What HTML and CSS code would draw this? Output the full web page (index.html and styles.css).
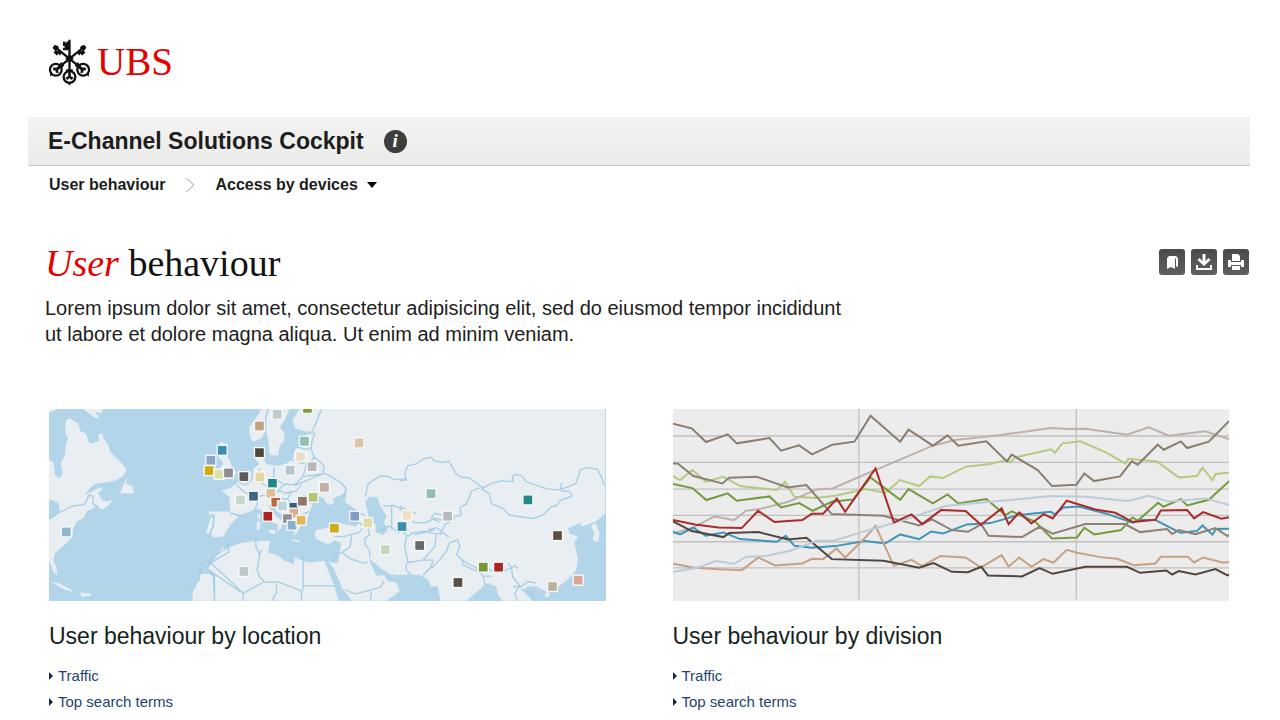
FILE: index.html
```html
<!DOCTYPE html>
<html lang="en">
<head>
<meta charset="utf-8">
<meta name="viewport" content="width=device-width, initial-scale=1">
<title>E-Channel Solutions Cockpit</title>
<link rel="stylesheet" href="styles.css">
</head>
<body>
<div class="page">
  <header>
    <a class="logo" href="#" aria-label="UBS home">
      <svg class="keys" viewBox="52 40 132 144" aria-hidden="true">
        <g fill="none" stroke="#111" stroke-width="7">
          <path d="M118 44V140M88 126L162 66M148 126L74 66"/>
          <circle cx="118" cy="158" r="18"/><circle cx="76" cy="136" r="18"/><circle cx="160" cy="136" r="18"/>
        </g>
        <g fill="#111">
          <path d="M98 49h7v4h4v-4h9v27H98v-8h5v-5h-5zM142 84l9-9 4 4 4-5 8 9-10 9-5-5-4 5zM154 62l10-2 6 8-8 10-12-9zM94 84l-9-9-4 4-4-5-8 9 10 9 5-5 4 5zM82 62l-10-2-6 8 8 10 12-9z"/>
          <path d="M105 101l13-13 13 13-13 13zM108 134h20v9h-20zM112 174h12l-6 11zM92 112l10 10-9 11-9-9zM144 112l-10 10 9 11 9-9zM58 144l10 4-9 9zM178 144l-10 4 9 9z"/>
          <path d="M114 142h8v14l9 4-7 7-6-6-6 6-7-7 9-4zM87 122l6 6-10 9 2 9-9-1-1-7-8-1 2-9 8 2zM149 122l-6 6 10 9-2 9 9-1 1-7 8-1-2-9-8 2z"/>
        </g>
      </svg>
      <span>UBS</span>
    </a>
    <div class="titlebar">
      <h1>E-Channel Solutions Cockpit</h1>
      <button class="info" type="button" aria-label="Information">i</button>
    </div>
    <nav class="crumbs" aria-label="Breadcrumb">
      <a href="#">User behaviour</a>
      <svg class="chevron" viewBox="0 0 10 16" aria-hidden="true"><path d="M1 1l8 7-8 7"/></svg>
      <button type="button">Access by devices <svg class="caret" viewBox="0 0 10 6" aria-hidden="true"><path d="M0 0h10L5 6z"/></svg></button>
    </nav>
  </header>

  <main>
    <div class="intro">
      <div>
        <h2><em>User</em> behaviour</h2>
        <p>Lorem ipsum dolor sit amet, consectetur adipisicing elit, sed do eiusmod tempor incididunt ut labore et dolore magna aliqua. Ut enim ad minim veniam.</p>
      </div>
      <div class="tools">
        <button type="button" aria-label="Bookmark"><svg viewBox="0 0 26 26"><path d="M8 9l2-2h7l2 2v9l-2-1v-7l-1-1v11l-4-2-4 2z"/></svg></button>
        <button type="button" aria-label="Download"><svg viewBox="0 0 26 26"><path d="M11.500 5h3v7l3-3 2 2-6.500 6-6.500-6 2-2 3 3zM5 16h2v3h12v-3h2v5H5z"/></svg></button>
        <button type="button" aria-label="Print"><svg viewBox="0 0 26 26"><path d="M9 5h6l2 2v5H9zM5 11h3v2h10v-2h3v7h-3v-2H8v2H5zM9 17h8v4H9z"/></svg></button>
      </div>
    </div>

    <div class="cards">
      <section>
        <svg class="figure map" viewBox="27 27 1671 576" role="img" aria-label="Map of user locations">
          <g class="land">
            <path d="M27 27h22l-8 6-14 3zM78 60l12-5 10 7 15 8 7 25h8l10 10 5 20 10 5 23-8-3-17 12-7 5 20 13 17 5 20 25 25 15 15 10 15-10 18-15 10-20 7-20 3-30 4-15 13-15 20 15-7 30-16 8 6-13 10 10 22 15 5 18-5-8 12-20 16-12-3-3-10-15 10-20 10-10 20-20 10-10 20-3 25-12 15-23 20-17 15-5 20 10 25 2 20-10-5-12-30-3-10V360l18-10 15-15-5-25-20-10h-8V180l13 5 5 40 15 10 8-15-6-30 13-25 3-35 7-15-10-20z"/>
            <path d="M258 238l5-4-5 17 20 9 4 20h-42zM130 27h60l-8 13-17-5 15 23-20-8zM35 545l25 7 35 18 3 6-23-6-25-14zM120 578l30 4 5 6-30 3zM540 125l25 8-8 28 16 25 5 19 12 12-10 18-50 6 16-16-6-20 10-15-15-20zM497 198l29-2 2 30-32 3z"/>
            <g transform="translate(480)">
              <path d="M185 27l-20 33-17 20 2 30 10 15 25-10 13-25 7 30 5 45 25 2 5-32 14-14-1-22-13-19 15-20 15-33z"/>
              <path d="M300 27l-22 33 8 25 34 10 25-3v8l-20 3-25 15-2 22-13 10-5 25-18 15-30 8-32-6-12-22 4-25-22 5-2 30 10 12-18 16-20 27-15 10-15 5-20 15-25 7 23 18 4 45H25l7 20-14 45 17 2 5 10 30-2 15-25 10-15 25-25 30-10 25-10 15 10 10 15 15 15 20 10-3 20 13-10 3-20-23-20-20-25 10-5 20 20 25 20 10 35 15 5-5 15 10-10 8-15 12-15 15-15 5-20 150 25-10 20-50-10-35 13-35 7-5 13 5 15 35 15 20-10 20 5-5 30-5 28-5 4-40-7-40 5-20-5-25-10-3 20-27-10-20-15-30-10 5-35-50 1-40 6-40 16-12-3-28 40-20 25-20 20-22 50V603H560l40-28-10-28 10-22h60l25 15 10 20h20l7 43h78l40-33 15-15 10-5 25 10 5 25 15 18h90l-30-28 15-15h25l30 15 30-10 35-25 25-30 5-30-10-50 10-20-25-10-5-15 35-15 8 10 12-5 30-10 27-25V27z"/>
              <path d="M1175 378l12-10 14 32-6 28-15-8 4-20zM1038 578l12 0-2 14-12-2zM172 365l10 0-2 25-10-3zM173 346l6-5 2 18-7-3zM208 390l20 0-3 14-17-7zM275 419l25 3-3 5-22-4zM368 425l22-6-10 11z"/>
            </g>
          </g>
          <g class="sea" transform="translate(480)">
            <path d="M325 350l14-40 18-22 14 7 14 20 19-5-4-15 42-17-7 28 36 24 10 30-32 3-40-12-30 5-20 10-32 8zM497 305l12-15 25 3 5 20 12 20 10 15-8 20 12 22-15 15-22-8 0-22-20-20zM373 482l13 3 16 20 26 60 28 38h-40l-13-48zM508 475l18 15 22 18 25 16 27 2-6 22-28-3-12-18-24 0-14-28z"/>
          </g>
          <g class="borders">
            <path d="M27 355l38-21 35-16 33-4 15-29 12 5-2 20 14 12M511 352l10-4 0 30-8 15-2 12M575 340l25 8M565 432l2 25-25 15-35 20-4 18H475M503 510l0 7h-25l0 25-12 8v12h-27M506 510l15 20 3 73M506 510l94 65"/>
            <g transform="translate(480)">
              <path d="M205 27l-8 30 1 33M365 27l-15 40-12 22M345 100l-8 22-3 25 10 25 15 12 14 15-4 25M290 140l27 8 18-5M275 180l30 10 28-5 12-15M320 190l-10 40 60-8M308 232l-22 22-35-1-30-20 2-32M160 210l-5 30-18 15-20-8M180 205l-8 25 15 20 25 15M110 255l25 23 25 10 13 20-8 24M170 290l35-5 30-10 10-15 20-8M237 270l18 10 35-7 15-18M285 258l55-25 35-13 20 10 30 20 15 18-10 20M230 295l30 2 20 15 25-6 30-3M310 283l24 28M210 300l28 8 25-10 12-25M260 322l12 18 35 5 20-10M285 350l-18 15-7-25M92 340l50 12M30 345l13 0-5 40-8 15M88 420l-4 22-38 25-15 15-30 15M25 482l105 98 65-35M168 410v30l12 25-8 45 8 22 17 15 33 0M185 450l-8 15M130 580v23M230 545l75 28v30M0 519h20l24 5v79M310 470v88h108M310 558v15M230 550v27l-13 26M372 475l12 10M403 410l28 0 20-6 25-5 14-15-8-15-30-3M403 463l23-5 25-17 5-35M428 458l25 20 40 12 12-3M405 465l-7 22M482 370l23 13 5 22-15 10 2 20 12 15 2 22M440 325l30 10 25 12M435 569l30 13 48-11 30-10 10-18M515 575l-3 28M497 290l8-38 35-23 25 0 20 10 35-2"/>
              <path d="M540 393l28-15 32 22M550 318l26-1v70M578 315l35 15"/>
            </g>
            <g transform="translate(1080)">
              <path d="M0 242l20-2-5-23 10-20 25-5 20-15 25-5 8 10 25 5 20-3 22 38 15 10 25 2 30 23 10 7 25-13 30-8 35 2-2-15 10-7 20 6 10 15 35 13 30 10 35 3 30-10 20-8 10-28 5-15 20-6 30 5 12 20 8 25 22 17M245 266l25 15 5 30 35 15 20 20 70 10 30-10 25-25 18-5 10-15 35-12-8-15-22 0-5-12 4-13M240 264l-25 10-5 18-10 20-18 10 2 24-25 5-20-3-12 12-24-5-25 13-20 0-15 0-20-35-23-2M0 318l25 15 25 8M165 355l-30 20-12 30M85 390l25-7 15 10M75 370l25-12 20 8M0 385l25 25 15-12 35-4 32 8 25-3 15 13M20 410l-5 30 10 48 45-7 35-40 5-38M70 481l30 0-5 20-25 25M95 505l25-25 23-30 5-20 25-10 8 20-10 25 25 22 40 20 25-2 20 10 35-2 30-15 10 8M185 475l5 20 50 22M240 517l10 12 25 0M250 529l8 28M325 490l10 12 5 30 20 25-15 25 8 20M340 560l25 0 20-15 25 5M365 568l28 10 10 25M20 487v25l15 13M95 355l10-15 20 5M45 405l60-16M280 497h5"/>
            </g>
          </g>
          <g class="markers" transform="translate(-13 -13)">
            <rect x="79" y="396" fill="#8fb6cf"/><rect x="547" y="151" fill="#3b8fae"/><rect x="513" y="181" fill="#8ea5c5"/><rect x="508" y="212" fill="#d2a90f"/><rect x="537" y="223" fill="#dfe1ab"/><rect x="566" y="219" fill="#918b92"/>
            <rect x="659" y="78" fill="#c6a27e"/><rect x="712" y="43" fill="#bfcbcd"/><rect x="803" y="25" fill="#7f9b34"/><rect x="659" y="158" fill="#51463d"/><rect x="794" y="124" fill="#90bfb3"/><rect x="782" y="170" fill="#eaddca"/><rect x="817" y="200" fill="#b8b8b8"/><rect x="751" y="211" fill="#b7c7cf"/><rect x="612" y="230" fill="#5c5b5c"/><rect x="660" y="231" fill="#e5d6a2"/><rect x="698" y="250" fill="#208789"/><rect x="854" y="262" fill="#c0b0a4"/><rect x="602" y="300" fill="#c1d9c7"/><rect x="641" y="289" fill="#3e6685"/><rect x="693" y="280" fill="#dcc09a"/><rect x="708" y="307" fill="#bf6640"/><rect x="728" y="318" fill="#bdd6dc"/><rect x="762" y="322" fill="#345e7c"/><rect x="762" y="340" fill="#dca992"/><rect x="788" y="304" fill="#8d7768"/><rect x="820" y="292" fill="#b7c478"/><rect x="743" y="356" fill="#929095"/><rect x="757" y="376" fill="#89b1ce"/><rect x="784" y="361" fill="#dfb85b"/><rect x="684" y="349" fill="#ae2422"/><rect x="884" y="385" fill="#d1ab13"/><rect x="945" y="349" fill="#829fc3"/><rect x="984" y="369" fill="#e1dca3"/><rect x="958" y="129" fill="#dac5a6"/><rect x="1037" y="449" fill="#c5d8be"/><rect x="612" y="515" fill="#bdc9c9"/>
            <rect x="1174" y="281" fill="#91beb2"/><rect x="1102" y="346" fill="#efddc4"/><rect x="1224" y="349" fill="#b7babc"/><rect x="1087" y="380" fill="#398eae"/><rect x="1140" y="437" fill="#65686c"/><rect x="1465" y="300" fill="#258788"/><rect x="1554" y="407" fill="#5e4c3f"/><rect x="1331" y="502" fill="#789634"/><rect x="1377" y="502" fill="#aa2624"/><rect x="1255" y="548" fill="#594c42"/><rect x="1539" y="560" fill="#bdb09f"/><rect x="1616" y="541" fill="#dca797"/>
          </g>
        </svg>
        <h3>User behaviour by location</h3>
        <ul>
          <li><a href="#">Traffic</a></li>
          <li><a href="#">Top search terms</a></li>
        </ul>
      </section>

      <section>
        <svg class="figure chart" viewBox="24 27 1668 575" role="img" aria-label="Line chart of user behaviour by division">
          <path class="grid" d="M24 108H1692M24 187H1692M24 267H1692M24 346H1692M24 425H1692M24 503H1692M581 27V597M1233 27V597"/>
          <g class="lines">
            <polyline stroke="#b5ca80" points="24,228 45,240 82,210 122,245 175,230 225,258 335,270 360,245 388,290 450,294 510,287 600,267 660,278 705,240 762,258 795,229 833,234 902,200 975,192 1025,180 1035,187 1050,172 1125,155 1157,148 1169,158 1191,130 1245,124 1320,156 1380,190 1389,176 1474,184 1540,232 1594,228 1611,203 1641,240 1650,222 1692,218"/>
            <polyline stroke="#bdb2ab" points="24,400 85,382 148,349 207,360 243,332 285,327 370,305 455,268 502,265 600,223 803,137 870,120 1000,106 1155,84 1210,87 1260,86 1385,104 1450,82 1510,107 1620,94 1692,118"/>
            <polyline stroke="#8b7d70" points="24,71 80,85 123,126 188,103 215,130 313,114 348,152 402,136 441,163 502,134 568,125 616,47 705,125 730,89 803,137 847,106 879,137 963,124 1025,184 1039,164 1117,210 1160,258 1233,254 1257,220 1286,243 1364,229 1399,184 1417,194 1477,134 1495,149 1546,124 1565,144 1630,125 1692,62"/>
            <polyline stroke="#3e95b9" points="24,395 45,403 85,383 122,407 175,397 225,417 335,425 362,407 388,437 440,443 510,438 600,423 660,430 705,403 762,417 798,394 834,400 905,373 975,369 1060,345 1157,335 1168,343 1195,322 1240,319 1320,340 1402,368 1420,360 1470,360 1545,398 1594,393 1611,376 1641,404 1651,387 1692,386"/>
            <polyline stroke="#769a3d" points="24,252 82,264 124,300 188,280 215,302 313,289 348,322 402,309 443,332 500,305 565,298 616,232 705,299 730,267 803,310 847,283 879,310 963,297 1020,345 1039,334 1110,365 1160,415 1235,412 1257,383 1287,403 1367,390 1401,352 1417,362 1478,308 1494,320 1546,297 1565,316 1630,299 1692,243"/>
            <polyline stroke="#8e8074" points="24,190 38,190 85,228 172,250 192,233 275,230 368,262 424,255 500,342 654,347 762,376 800,358 860,390 908,395 948,373 970,407 1070,411 1123,380 1162,401 1260,372 1378,372 1424,396 1505,387 1520,402 1540,390 1590,402 1650,384 1686,408 1692,403"/>
            <polyline stroke="#c6a184" points="24,491 85,502 160,507 230,510 280,472 330,496 412,490 440,476 474,477 514,445 540,472 600,413 631,377 686,497 739,479 771,498 825,468 901,472 947,502 1009,465 1030,499 1062,472 1098,500 1135,477 1164,488 1204,449 1235,458 1305,471 1355,476 1405,495 1470,490 1486,470 1567,470 1586,487 1613,472 1674,488 1692,485"/>
            <polyline stroke="#51463f" points="24,364 80,393 175,411 192,399 280,396 368,418 424,413 500,477 655,482 762,503 805,489 860,515 908,516 948,500 968,526 1070,529 1123,504 1162,521 1260,500 1385,500 1424,518 1503,511 1520,523 1540,513 1590,523 1650,507 1686,526 1692,523"/>
            <polyline stroke="#bccbd8" points="24,516 100,502 152,483 207,491 243,470 300,468 375,452 455,422 505,422 600,393 700,365 840,318 1000,303 1155,288 1260,290 1388,303 1450,287 1510,304 1620,295 1692,315"/>
            <polyline stroke="#a92b2b" points="24,360 90,373 160,382 230,384 279,332 328,366 412,360 440,341 474,341 515,296 540,335 631,205 686,367 739,343 771,372 827,330 901,333 947,374 1009,325 1030,372 1062,337 1098,370 1135,342 1162,355 1204,302 1290,328 1350,338 1402,366 1470,359 1486,331 1565,330 1586,355 1613,336 1668,356 1692,351"/>
          </g>
        </svg>
        <h3>User behaviour by division</h3>
        <ul>
          <li><a href="#">Traffic</a></li>
          <li><a href="#">Top search terms</a></li>
        </ul>
      </section>
    </div>
  </main>
</div>
</body>
</html>
```
FILE: styles.css
```css
* { box-sizing: border-box; }

body {
  margin: 0;
  background: #fff;
  color: #1d1d1d;
  font-family: "Liberation Sans", Arial, sans-serif;
}

h1, h2, h3, p, ul { margin: 0; padding: 0; }
a { color: inherit; text-decoration: none; }
button { font: inherit; color: inherit; border: 0; padding: 0; background: none; cursor: pointer; }
svg { display: block; }

.page { padding: 38px 30px 0 28px; }

.logo {
  display: flex;
  align-items: center;
  gap: 6px;
  height: 48px;
  margin: 0 0 31px 20px;
  width: max-content;
  color: #e60000;
  font: 39px/48px "Liberation Serif", "Times New Roman", serif;
}
.keys { width: 43px; height: 48px; }

.titlebar {
  display: flex;
  align-items: center;
  gap: 20px;
  min-height: 49px;
  padding: 0 20px;
  border-bottom: 1px solid #c6c6c6;
  background: linear-gradient(#f3f3f2, #ebebea);
}
h1 { font-size: 23px; line-height: 28px; }
.info {
  width: 23px;
  height: 23px;
  border-radius: 50%;
  background: #3d3d3d;
  color: #fff;
  font: italic bold 19px/22px "Liberation Serif", serif;
}

.crumbs {
  display: flex;
  align-items: center;
  gap: 20px;
  padding: 8px 21px;
  font-size: 16px;
  font-weight: bold;
  line-height: 22px;
}
.chevron { width: 10px; height: 16px; fill: none; stroke: #a5a5a5; stroke-width: 1; }
.crumbs button { display: flex; align-items: center; gap: 9px; }
.caret { width: 10px; height: 6px; }

.intro {
  display: flex;
  justify-content: space-between;
  padding: 35px 1px 0 17px;
}
h2 {
  color: #111;
  font: 38px/48px "Liberation Serif", "Times New Roman", serif;
}
h2 em { color: #e60000; }
.intro p { max-width: 812px; margin-top: 8px; font-size: 20px; line-height: 26px; }
.tools { display: flex; gap: 6px; padding-top: 10px; }
.tools button {
  width: 26px;
  height: 26px;
  border-radius: 3px;
  background: linear-gradient(#4a4a4a, #606060);
}
.tools svg { width: 26px; height: 26px; fill: #fff; }

.cards {
  display: grid;
  grid-template-columns: 1fr 1fr;
  gap: 67px;
  padding: 62px 21px 0;
}
.figure { width: 100%; height: auto; }
.map { background: #b3d5e9; }
.land { fill: #e8eef2; }
.sea { fill: #b3d5e9; }
.borders { fill: none; stroke: #a7cee4; stroke-width: 4; stroke-linejoin: round; }
.markers rect { width: 26px; height: 26px; stroke: #f8fafa; stroke-width: 8; paint-order: stroke; }
.chart { background: #ececec; }
.grid { fill: none; stroke: #c0c0c0; stroke-width: 4; }
.lines { fill: none; stroke-width: 6; }

h3 { margin-top: 20px; color: #142322; font-size: 23px; font-weight: normal; line-height: 30px; }
ul { margin-top: 12px; list-style: none; }
li { display: flex; align-items: center; gap: 5px; color: #1f3f73; font-size: 15px; line-height: 26px; }
li::before {
  content: "";
  border: solid transparent;
  border-width: 4px 0 4px 4px;
  border-left-color: #12284f;
}
```
